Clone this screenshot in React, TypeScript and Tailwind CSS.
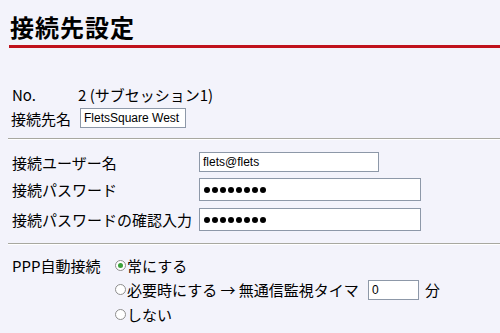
import React from "react";

const jp = { fontFamily: '"Noto Sans CJK JP", "DejaVu Sans", sans-serif' };
const latin = { fontFamily: '"Liberation Sans", "DejaVu Sans", sans-serif' };

function Radio({ checked }: { checked?: boolean }) {
  return (
    <span className="inline-flex items-center justify-center w-[11px] h-[11px] rounded-full border border-[#8e8e8e] bg-white mr-[1px]">
      {checked && <span className="w-[5px] h-[5px] rounded-full bg-[#3aa13a]" />}
    </span>
  );
}

function Rule({ className }: { className: string }) {
  return (
    <div className={className}>
      <div className="ml-[8px] h-[1px] bg-[#a8a8a0]" />
      <div className="ml-[8px] h-[1px] bg-white" />
    </div>
  );
}

function Dots() {
  return (
    <div className="flex gap-[2px]">
      {[0, 1, 2, 3, 4, 5, 6, 7].map((i) => (
        <span key={i} className="w-[6px] h-[6px] rounded-full bg-black" />
      ))}
    </div>
  );
}

export default function App() {
  return (
    <div className="w-[500px] h-[333px] bg-[#f3f3fb] overflow-hidden text-[15px] text-black leading-none" style={jp}>
      <div className="pl-[10px] pt-[13px] h-[45px] text-[24px] font-bold leading-[28px] tracking-[1px]">接続先設定</div>
      <div className="ml-[9px] h-[3px] bg-[#c0111c]" />
      <div className="h-[36px]" />
      <div className="flex items-center h-[20px] pl-[12px]">
        <span className="w-[66px]">No.</span>
        <span>2 (サブセッション1)</span>
      </div>
      <div className="h-[4px]" />
      <div className="flex items-center h-[20px] pl-[11px]">
        <span className="w-[69px]">接続先名</span>
        <div className="w-[106px] h-[20px] border border-[#8d98a8] bg-white flex items-center pl-[3px] text-[12px] whitespace-nowrap overflow-hidden" style={latin}>
          FletsSquare West
        </div>
      </div>
      <Rule className="mt-[10px]" />
      <div className="h-[12px]" />
      <div className="flex items-center h-[20px] pl-[12px]">
        <span className="w-[187px]">接続ユーザー名</span>
        <div className="w-[180px] h-[20px] border border-[#8d98a8] bg-white flex items-center pl-[3px] text-[12px]" style={latin}>
          flets@flets
        </div>
      </div>
      <div className="h-[6px]" />
      <div className="flex items-center h-[23px] pl-[12px]">
        <span className="w-[187px]">接続パスワード</span>
        <div className="w-[222px] h-[23px] border border-[#8d98a8] bg-white flex items-center pl-[4px]">
          <Dots />
        </div>
      </div>
      <div className="h-[7px]" />
      <div className="flex items-center h-[23px] pl-[12px]">
        <span className="w-[187px] whitespace-nowrap">接続パスワードの確認入力</span>
        <div className="w-[222px] h-[23px] border border-[#8d98a8] bg-white flex items-center pl-[4px]">
          <Dots />
        </div>
      </div>
      <Rule className="mt-[12px]" />
      <div className="h-[8px]" />
      <div className="flex items-center h-[24px] pl-[12px]">
        <span className="w-[103px]">PPP自動接続</span>
        <Radio checked />
        <span>常にする</span>
      </div>
      <div className="flex items-center h-[25px] pl-[115px]">
        <Radio />
        <span>必要時にする → 無通信監視タイマ</span>
        <div className="ml-[9px] w-[51px] h-[20px] border border-[#8d98a8] bg-white flex items-center pl-[3px] text-[12px]" style={latin}>
          0
        </div>
        <span className="ml-[6px]">分</span>
      </div>
      <div className="flex items-center h-[24px] pl-[115px]">
        <Radio />
        <span>しない</span>
      </div>
    </div>
  );
}
